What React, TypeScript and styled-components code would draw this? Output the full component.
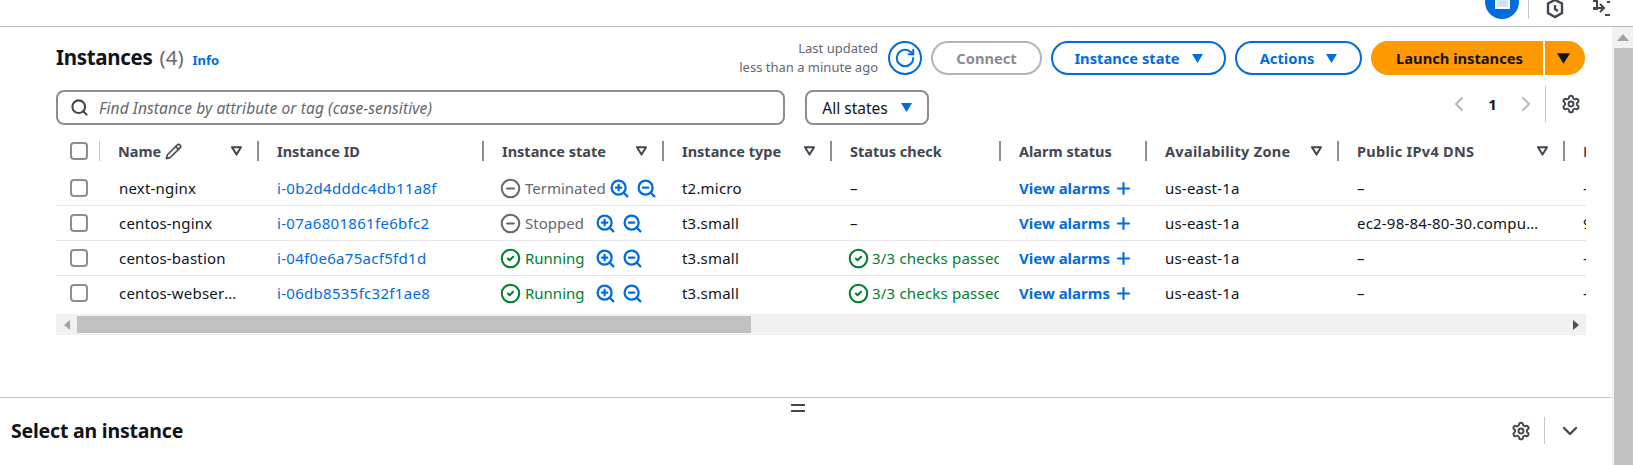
import React from "react";
import styled, { createGlobalStyle } from "styled-components";
import {
  ChevronDown,
  ChevronLeft,
  ChevronRight,
  CircleCheck,
  CircleMinus,
  Pencil,
  Plus,
  RotateCw,
  Search,
  Settings,
  ZoomIn,
  ZoomOut,
} from "lucide-react";

const BLUE = "#006ce0";
const INK = "#0f141a";
const SLATE = "#424650";
const GREY = "#656871";
const GREEN = "#00802f";
const COLUMNS = "43px 158px 225px 180px 168px 169px 146px 192px 226px 23px";

const Global = createGlobalStyle`
  html, body { margin: 0; padding: 0; background: #fff; }
  body { font-family: "Noto Sans", "Open Sans", Arial, sans-serif; font-size: 14px; color: ${INK}; }
  * { box-sizing: border-box; }
`;

const Page = styled.div`
  width: 1633px;
  height: 465px;
  overflow: hidden;
  display: flex;
  flex-direction: column;
`;

const TopBar = styled.header`
  height: 27px;
  flex: none;
  overflow: hidden;
  border-bottom: 1px solid #b9b9bd;
  display: flex;
  justify-content: flex-end;
  align-items: flex-end;
  padding: 0 22px 7px 0;
`;

const TopCircle = styled.div`
  width: 34px;
  height: 34px;
  flex: none;
  border-radius: 50%;
  background: ${BLUE};
  display: flex;
  align-items: center;
  justify-content: center;
  margin-right: 9px;
`;

const TopSquare = styled.div`
  width: 15px;
  height: 14px;
  border: 2px solid #fff;
  background: #cfe3fa;
`;

const TopDivider = styled.div`
  width: 1px;
  height: 26px;
  flex: none;
  background: #c6c6cd;
  margin-right: 17px;
`;

const TopIcon = styled.svg<{ $gap: number }>`
  flex: none;
  color: ${SLATE};
  margin-right: ${(p) => p.$gap}px;
`;

const Body = styled.div`
  flex: 1;
  min-height: 0;
  display: flex;
`;

const Main = styled.main`
  width: 1612px;
  flex: none;
  display: flex;
  flex-direction: column;
  position: relative;
`;

const Content = styled.section`
  flex: 1;
  padding: 14px 26px 0 56px;
`;

const HeaderRow = styled.div`
  display: flex;
  align-items: center;
  height: 34px;
`;

const TitleBlock = styled.div`
  display: flex;
  align-items: center;
  margin-top: -2px;
`;

const Title = styled.h1`
  margin: 0;
  font-size: 20.5px;
  font-weight: 700;
  letter-spacing: -0.3px;
  color: ${INK};
`;

const Count = styled.span`
  font-weight: 400;
  color: ${GREY};
  letter-spacing: 0;
  margin-left: 2px;
`;

const InfoLink = styled.a`
  margin: 5px 0 0 9px;
  font-size: 13px;
  font-weight: 700;
  color: ${BLUE};
`;

const Updated = styled.div`
  margin-left: auto;
  text-align: right;
  font-size: 13px;
  line-height: 19px;
  color: ${GREY};
`;

const RoundIconButton = styled.button`
  width: 34px;
  height: 34px;
  flex: none;
  margin-left: 10px;
  padding: 0;
  border: 2px solid ${BLUE};
  border-radius: 50%;
  background: #fff;
  color: ${BLUE};
  display: flex;
  align-items: center;
  justify-content: center;
`;

const Pill = styled.button<{ $w: number; $off?: boolean }>`
  width: ${(p) => p.$w}px;
  height: 34px;
  flex: none;
  margin-left: 9px;
  padding: 0;
  border: 2px solid ${(p) => (p.$off ? "#b4b4bb" : BLUE)};
  border-radius: 17px;
  background: #fff;
  color: ${(p) => (p.$off ? "#8c8c94" : BLUE)};
  font: 700 14.7px "Noto Sans", sans-serif;
  display: flex;
  align-items: center;
  justify-content: center;
  gap: 12px;
`;

const LaunchGroup = styled.div`
  width: 214px;
  height: 34px;
  flex: none;
  margin: 0 1px 0 9px;
  display: flex;
  color: ${INK};
  font-weight: 700;
  font-size: 14.7px;
`;

const LaunchMain = styled.div`
  width: 172px;
  background: #ff9900;
  border-radius: 17px 0 0 17px;
  display: flex;
  align-items: center;
  justify-content: center;
  padding-left: 5px;
`;

const LaunchCaret = styled.div`
  flex: 1;
  margin-left: 2px;
  padding-right: 4px;
  background: #ff9900;
  border-radius: 0 17px 17px 0;
  display: flex;
  align-items: center;
  justify-content: center;
`;

const FilterRow = styled.div`
  display: flex;
  align-items: flex-start;
  margin-top: 15px;
  height: 35px;
`;

const SearchBox = styled.div`
  width: 729px;
  height: 35px;
  flex: none;
  border: 2px solid #8c8c94;
  border-radius: 8px;
  display: flex;
  align-items: center;
  padding-left: 12px;
  gap: 10px;
  color: ${SLATE};
`;

const Placeholder = styled.span`
  font-style: italic;
  font-size: 15.5px;
  letter-spacing: 0.1px;
  color: ${GREY};
`;

const StatesSelect = styled.div`
  width: 124px;
  height: 35px;
  flex: none;
  margin-left: 20px;
  border: 2px solid #8c8c94;
  border-radius: 8px;
  display: flex;
  align-items: center;
  justify-content: center;
  gap: 13px;
  font-size: 15.5px;
  color: ${INK};
`;

const Pager = styled.div`
  margin-left: auto;
  padding-right: 5px;
  display: flex;
  align-items: center;
  height: 36px;
  margin-top: -4px;
  color: #b4b4bb;
`;

const PageNumber = styled.span`
  width: 43px;
  text-align: center;
  font-weight: 700;
  font-size: 15px;
  color: ${INK};
`;

const PagerDivider = styled.div`
  width: 1px;
  height: 36px;
  background: #c6c6cd;
  margin: 0 15px 0 7px;
`;

const GearSlot = styled.div`
  display: flex;
  color: ${SLATE};
`;

const TableHead = styled.div`
  display: grid;
  grid-template-columns: ${COLUMNS};
  height: 40px;
  margin-top: 6px;
  align-items: center;
  overflow: hidden;
`;

const TableRow = styled.div<{ $last?: boolean }>`
  display: grid;
  grid-template-columns: ${COLUMNS};
  height: 35px;
  align-items: center;
  overflow: hidden;
  border-bottom: 1px solid ${(p) => (p.$last ? "transparent" : "#e6e6e8")};
`;

const CheckCell = styled.div`
  padding-left: 14px;
  display: flex;
  align-items: center;
`;

const CheckBox = styled.span`
  width: 18px;
  height: 18px;
  border: 2px solid #8c8c94;
  border-radius: 4px;
  background: #fff;
`;

const HeadCell = styled.div<{ $light?: boolean; $spread?: number }>`
  height: 20px;
  border-left: ${(p) => (p.$light ? "1.5px solid #c6c6cd" : "2px solid #8c8c94")};
  padding: 0 15px 0 18px;
  display: flex;
  align-items: center;
  justify-content: space-between;
  font-weight: 700;
  font-size: 14.5px;
  letter-spacing: ${(p) => p.$spread ?? 0}px;
  color: ${SLATE};
  white-space: nowrap;
  overflow: hidden;
`;

const HeadLabel = styled.span`
  display: flex;
  align-items: center;
  gap: 4px;
`;

const Cell = styled.div`
  padding-left: 20px;
  white-space: nowrap;
  overflow: hidden;
  display: flex;
  align-items: center;
  font-size: 15px;
  letter-spacing: 0.2px;
  color: ${INK};
  min-width: 0;
`;

const Ellipsis = styled.span`
  overflow: hidden;
  text-overflow: ellipsis;
`;

const NameText = styled(Ellipsis)`
  max-width: 121px;
`;

const DnsText = styled(Ellipsis)`
  max-width: 184px;
`;

const IdLink = styled.a`
  color: ${BLUE};
  letter-spacing: 0.3px;
`;

const StateLabel = styled.span<{ $tone: string }>`
  min-width: 67px;
  margin-left: 4px;
  letter-spacing: 0;
  color: ${(p) => p.$tone};
`;

const ZoomGroup = styled.span`
  display: flex;
  gap: 6px;
  margin-left: 3px;
  color: ${BLUE};
`;

const StatusGlyph = styled.span`
  display: flex;
  flex: none;
  margin-left: -2px;
`;

const PassLabel = styled.span`
  margin-left: 3px;
  color: ${GREEN};
`;

const AlarmLink = styled.a`
  display: flex;
  align-items: center;
  gap: 4px;
  color: ${BLUE};
  font-weight: 700;
  letter-spacing: 0;
`;

const HScroll = styled.div`
  height: 21px;
  margin-top: 3px;
  background: #f1f1f1;
  display: flex;
  align-items: center;
  justify-content: space-between;
  position: relative;
`;

const HThumb = styled.div`
  position: absolute;
  left: 21px;
  top: 2px;
  width: 674px;
  height: 17px;
  background: #c1c1c1;
`;

const ArrowSlot = styled.span`
  width: 21px;
  display: flex;
  justify-content: center;
`;

const Footer = styled.footer`
  height: 68px;
  flex: none;
  border-top: 1px solid #c6c6cd;
  display: flex;
  align-items: center;
  padding: 0 30px 2px 11px;
  position: relative;
`;

const SplitHandle = styled.div`
  position: absolute;
  left: 791px;
  top: 6px;
  width: 14px;
  height: 8px;
  border-top: 2px solid ${SLATE};
  border-bottom: 2px solid ${SLATE};
`;

const FooterTitle = styled.h2`
  margin: 0;
  font-size: 19.5px;
  font-weight: 700;
  letter-spacing: -0.2px;
  color: ${INK};
`;

const FooterTools = styled.div`
  margin-left: auto;
  display: flex;
  align-items: center;
  color: ${SLATE};
`;

const FooterDivider = styled.div`
  width: 1px;
  height: 27px;
  background: #c6c6cd;
  margin: 0 13px 0 13px;
`;

const VScroll = styled.aside`
  flex: 1;
  background: #f1f1f1;
  display: flex;
  flex-direction: column;
`;

const VArrow = styled.div`
  height: 21px;
  display: flex;
  align-items: center;
  justify-content: center;
  color: #a3a3a3;
`;

const VThumb = styled.div`
  flex: 1;
  margin-left: 2px;
  background: #c1c1c1;
`;

const Caret = ({ color = BLUE, size = 11 }: { color?: string; size?: number }) => (
  <svg width={size} height={size - 2} viewBox="0 0 11 9">
    <polygon points="0,0 11,0 5.5,9" fill={color} />
  </svg>
);

const FilterCaret = () => (
  <svg width="11" height="10" viewBox="0 0 11 10" style={{ flex: "none" }}>
    <polygon points="1,1.2 10,1.2 5.5,8.6" fill="none" stroke={SLATE} strokeWidth="2" strokeLinejoin="round" />
  </svg>
);

const SmallArrow = ({ dir }: { dir: "left" | "right" }) => (
  <svg width="6" height="10" viewBox="0 0 6 10">
    <polygon points={dir === "left" ? "6,0 0,5 6,10" : "0,0 6,5 0,10"} fill={dir === "left" ? "#a3a3a3" : "#505050"} />
  </svg>
);

type Head = { label: string; filter?: boolean; light?: boolean; pencil?: boolean; spread?: number };

const heads: Head[] = [
  { label: "Name", filter: true, pencil: true, light: true },
  { label: "Instance ID" },
  { label: "Instance state", filter: true },
  { label: "Instance type", filter: true },
  { label: "Status check" },
  { label: "Alarm status" },
  { label: "Availability Zone", filter: true, spread: 0.3 },
  { label: "Public IPv4 DNS", filter: true, spread: 0.3 },
  { label: "Elastic IP" },
];

type Row = {
  name: string;
  id: string;
  state: "Terminated" | "Stopped" | "Running";
  type: string;
  dns: string;
  last: string;
};

const rows: Row[] = [
  { name: "next-nginx", id: "i-0b2d4dddc4db11a8f", state: "Terminated", type: "t2.micro", dns: "–", last: "–" },
  { name: "centos-nginx", id: "i-07a6801861fe6bfc2", state: "Stopped", type: "t3.small", dns: "ec2-98-84-80-30.compute-1.amazonaws.com", last: "98.84.80.30" },
  { name: "centos-bastion", id: "i-04f0e6a75acf5fd1d", state: "Running", type: "t3.small", dns: "–", last: "–" },
  { name: "centos-webserver", id: "i-06db8535fc32f1ae8", state: "Running", type: "t3.small", dns: "–", last: "–" },
];

export default function App() {
  return (
    <Page>
      <Global />
      <TopBar>
        <TopCircle>
          <TopSquare />
        </TopCircle>
        <TopDivider />
        <TopIcon $gap={27} width="18" height="20" viewBox="0 0 18 20" fill="none" stroke="currentColor" strokeWidth="2.4">
          <path d="M9 1 16 4.5V14L9 18 2 14V4.5Z" />
          <path d="M9 6v4l3 2" />
        </TopIcon>
        <TopIcon $gap={0} width="20" height="20" viewBox="0 0 20 20" fill="none" stroke="currentColor" strokeWidth="2">
          <path d="M2 2h4v8H2M9 5l4 4-4 4M2 9h10M14 16h5M16 3h3" />
        </TopIcon>
      </TopBar>
      <Body>
        <Main>
          <Content>
            <HeaderRow>
              <TitleBlock>
                <Title>
                  Instances <Count>(4)</Count>
                </Title>
                <InfoLink>Info</InfoLink>
              </TitleBlock>
              <Updated>
                Last updated
                <br />
                less than a minute ago
              </Updated>
              <RoundIconButton aria-label="Refresh">
                <RotateCw size={22} strokeWidth={2.2} />
              </RoundIconButton>
              <Pill $w={111} $off>
                Connect
              </Pill>
              <Pill $w={175}>
                Instance state <Caret />
              </Pill>
              <Pill $w={127}>
                Actions <Caret />
              </Pill>
              <LaunchGroup>
                <LaunchMain>Launch instances</LaunchMain>
                <LaunchCaret>
                  <Caret color={INK} size={13} />
                </LaunchCaret>
              </LaunchGroup>
            </HeaderRow>

            <FilterRow>
              <SearchBox>
                <Search size={19} strokeWidth={2.6} />
                <Placeholder>Find Instance by attribute or tag (case-sensitive)</Placeholder>
              </SearchBox>
              <StatesSelect>
                All states <Caret />
              </StatesSelect>
              <Pager>
                <ChevronLeft size={24} strokeWidth={1.8} />
                <PageNumber>1</PageNumber>
                <ChevronRight size={24} strokeWidth={1.8} />
                <PagerDivider />
                <GearSlot>
                  <Settings size={20} strokeWidth={2.3} />
                </GearSlot>
              </Pager>
            </FilterRow>

            <TableHead>
              <CheckCell>
                <CheckBox />
              </CheckCell>
              {heads.map((h) => (
                <HeadCell key={h.label} $light={h.light} $spread={h.spread}>
                  <HeadLabel>
                    {h.label}
                    {h.pencil && <Pencil size={17} strokeWidth={2.3} />}
                  </HeadLabel>
                  {h.filter && <FilterCaret />}
                </HeadCell>
              ))}
            </TableHead>

            {rows.map((r, i) => {
              const running = r.state === "Running";
              const tone = running ? GREEN : GREY;
              return (
                <TableRow key={r.id} $last={i === rows.length - 1}>
                  <CheckCell>
                    <CheckBox />
                  </CheckCell>
                  <Cell>
                    <NameText>{r.name}</NameText>
                  </Cell>
                  <Cell>
                    <IdLink>{r.id}</IdLink>
                  </Cell>
                  <Cell>
                    <StatusGlyph>
                      {running ? (
                        <CircleCheck size={21} color={tone} strokeWidth={2.3} />
                      ) : (
                        <CircleMinus size={21} color={tone} strokeWidth={2.3} />
                      )}
                    </StatusGlyph>
                    <StateLabel $tone={tone}>{r.state}</StateLabel>
                    <ZoomGroup>
                      <ZoomIn size={21} strokeWidth={2.6} />
                      <ZoomOut size={21} strokeWidth={2.6} />
                    </ZoomGroup>
                  </Cell>
                  <Cell>{r.type}</Cell>
                  <Cell>
                    {running ? (
                      <>
                        <StatusGlyph>
                          <CircleCheck size={21} color={GREEN} strokeWidth={2.3} />
                        </StatusGlyph>
                        <PassLabel>3/3 checks passed</PassLabel>
                      </>
                    ) : (
                      "–"
                    )}
                  </Cell>
                  <Cell>
                    <AlarmLink>
                      View alarms <Plus size={19} strokeWidth={2.6} />
                    </AlarmLink>
                  </Cell>
                  <Cell>us-east-1a</Cell>
                  <Cell>
                    <DnsText>{r.dns}</DnsText>
                  </Cell>
                  <Cell>{r.last}</Cell>
                </TableRow>
              );
            })}

            <HScroll>
              <ArrowSlot>
                <SmallArrow dir="left" />
              </ArrowSlot>
              <HThumb />
              <ArrowSlot>
                <SmallArrow dir="right" />
              </ArrowSlot>
            </HScroll>
          </Content>

          <Footer>
            <SplitHandle />
            <FooterTitle>Select an instance</FooterTitle>
            <FooterTools>
              <Settings size={20} strokeWidth={2.3} />
              <FooterDivider />
              <ChevronDown size={24} strokeWidth={2.3} />
            </FooterTools>
          </Footer>
        </Main>
        <VScroll>
          <VArrow>
            <svg width="12" height="7" viewBox="0 0 12 7">
              <polygon points="6,0 12,7 0,7" fill="currentColor" />
            </svg>
          </VArrow>
          <VThumb />
        </VScroll>
      </Body>
    </Page>
  );
}
